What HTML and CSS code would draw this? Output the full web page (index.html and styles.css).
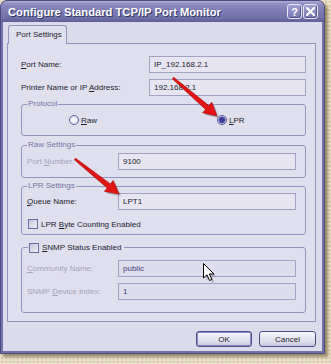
FILE: index.html
```html
<!DOCTYPE html>
<html lang="en">
<head>
    <meta charset="UTF-8">
    <meta name="viewport" content="width=device-width, initial-scale=1.0">
    <title>Configure Standard TCP/IP Port Monitor</title>
    <link rel="stylesheet" href="styles.css">
</head>
<body>
<div class="desktop">
    <div class="window">
        <div class="titlebar">
            <span class="title">Configure Standard TCP/IP Port Monitor</span>
            <div class="title-buttons">
                <span class="tbtn">?</span>
                <span class="tbtn">
                    <svg width="9" height="9" viewBox="0 0 9 9"><path d="M1 1L8 8M8 1L1 8" stroke="#fff" stroke-width="2" stroke-linecap="round"/></svg>
                </span>
            </div>
        </div>
        <div class="frame">
            <div class="client">
                <div class="tabs"><div class="tab">Port Settings</div></div>
                <div class="panel">
                    <div class="row first">
                        <span class="label wide"><u>P</u>ort Name:</span>
                        <div class="field">IP_192.168.2.1</div>
                    </div>
                    <div class="row">
                        <span class="label wide">Printer Name or IP <u>A</u>ddress:</span>
                        <div class="field">192.168.2.1</div>
                    </div>

                    <div class="group protocol">
                        <span class="legend">Protocol</span>
                        <div class="radios">
                            <span class="radio"><span class="dot"></span><span><u>R</u>aw</span></span>
                            <span class="radio checked"><span class="dot"></span><span><u>L</u>PR</span></span>
                        </div>
                    </div>

                    <div class="group raw">
                        <span class="legend">Raw Settings</span>
                        <div class="row first">
                            <span class="label disabled">Port <u>N</u>umber:</span>
                            <div class="field">9100</div>
                        </div>
                    </div>

                    <div class="group lpr">
                        <span class="legend">LPR Settings</span>
                        <div class="row first">
                            <span class="label"><u>Q</u>ueue Name:</span>
                            <div class="field">LPT1</div>
                        </div>
                        <div class="check"><span class="box"></span><span>LPR <u>B</u>yte Counting Enabled</span></div>
                    </div>

                    <div class="group snmp">
                        <div class="legend check"><span class="box"></span><span><u>S</u>NMP Status Enabled</span></div>
                        <div class="row first">
                            <span class="label disabled"><u>C</u>ommunity Name:</span>
                            <div class="field off">public</div>
                        </div>
                        <div class="row">
                            <span class="label disabled">SNMP <u>D</u>evice Index:</span>
                            <div class="field off">1</div>
                        </div>
                    </div>
                </div>
                <div class="buttons">
                    <span class="btn default">OK</span>
                    <span class="btn">Cancel</span>
                </div>
            </div>
        </div>
    </div>

    <!-- red pointers drawn on top of the screenshot -->
    <svg class="arrows" width="331" height="364" viewBox="0 0 331 364">
        <g fill="#5a4a50" opacity="0.35" transform="translate(2 2)">
            <polygon points="172.3,78.8 173.7,77.2 208.8,105.6 211.8,102.2 217,116 202.6,112.8 205.6,109.4"/>
            <polygon points="74.4,159.8 75.6,158.2 110.4,183.9 113.2,180.4 119,194 104.4,191.4 107.2,187.9"/>
        </g>
        <g fill="#e21414" stroke="#a50808" stroke-width="0.6" stroke-linejoin="round">
            <polygon points="172.3,78.8 173.7,77.2 208.8,105.6 211.8,102.2 217,116 202.6,112.8 205.6,109.4"/>
            <polygon points="74.4,159.8 75.6,158.2 110.4,183.9 113.2,180.4 119,194 104.4,191.4 107.2,187.9"/>
        </g>
    </svg>

    <svg class="cursor" width="14" height="21" viewBox="0 0 14 21">
        <polygon points="1.5,1.5 1.5,16 5,12.8 7.5,18.5 9.8,17.5 7.3,12 12,12" fill="#6a6a80" opacity="0.35" transform="translate(1.5 1.5)"/>
        <polygon points="0.5,0.5 0.5,15 4,11.8 6.5,17.5 8.8,16.5 6.3,11 11,11" fill="#fff" stroke="#000" stroke-width="1" stroke-linejoin="round"/>
    </svg>
</div>
</body>
</html>
```

FILE: styles.css
```css
* {
    box-sizing: border-box;
}
body {
    margin: 0;
    font-family: "Liberation Sans", Arial, sans-serif;
    font-size: 8px;
    color: #1c1c2c;
}
.desktop {
    position: relative;
    width: 331px;
    height: 364px;
    overflow: hidden;
    background-color: #e8dec5;
    background-image:
        radial-gradient(rgba(150, 120, 70, 0.22) 1px, transparent 1px),
        radial-gradient(rgba(255, 255, 255, 0.4) 1px, transparent 1px);
    background-size: 4px 4px, 5px 5px;
    background-position: 0 0, 2px 1px;
}
.window {
    width: 325px;
    height: 354px;
    display: flex;
    flex-direction: column;
    border: 1px solid #4b4b7d;
    border-radius: 7px 7px 0 0;
    background: #7272a8;
    box-shadow: 3px 3px 3px rgba(95, 75, 35, 0.55);
    overflow: hidden;
}
.titlebar {
    height: 21px;
    flex: none;
    display: flex;
    align-items: center;
    justify-content: space-between;
    padding: 0 6px 0 7px;
    background: linear-gradient(#aeaed6, #8c8cc0 3px, #7a7ab1 11px, #7070a9 17px, #5f5f98);
}
.title {
    color: #fff;
    font-weight: bold;
    font-size: 11.2px;
    text-shadow: 1px 1px 0 #35356a;
}
.title-buttons {
    display: flex;
    gap: 1px;
}
.tbtn {
    width: 15px;
    height: 15px;
    border: 1px solid #e6e6f4;
    border-radius: 3px;
    background: linear-gradient(#a0a0d0, #7878b2);
    box-shadow: inset -1px -1px 0 #56568e;
    color: #fff;
    font-weight: bold;
    font-size: 11px;
    display: flex;
    align-items: center;
    justify-content: center;
}
.frame {
    flex: 1;
    display: flex;
    padding: 0 2px 2px;
}
.client {
    flex: 1;
    min-width: 0;
    display: flex;
    flex-direction: column;
    background: #dcdbeb;
    padding: 3px 6px 0 4px;
}
.tabs {
    height: 18px;
    padding-left: 1px;
    display: flex;
}
.tab {
    position: relative;
    z-index: 1;
    width: 59px;
    height: 19px;
    padding: 4px 0 0 7px;
    border: 1px solid #9393c0;
    border-bottom: none;
    border-radius: 3px 3px 0 0;
    background: #e0dfee;
}
.panel {
    height: 279px;
    border: 1px solid #9393c0;
    background: #e0dfee;
    padding: 12px 9px 0 13px;
}
.row {
    display: flex;
    align-items: center;
    height: 17px;
    margin-top: 6px;
}
.row.first {
    margin-top: 0;
}
.label {
    width: 91px;
    flex: none;
}
.label.wide {
    width: 128px;
}
.label.disabled {
    color: #a3a3bb;
}
.field {
    flex: 1;
    min-width: 0;
    height: 17px;
    padding: 3px 0 0 4px;
    border: 1px solid #a2a2c4;
    background: #e6e5f1;
    color: #1c1c2c;
}
.field.off {
    background: #dedded;
    color: #3c3c78;
}
.group {
    position: relative;
    border: 1px solid #9494c4;
    border-radius: 3px;
    padding: 0 9px 0 5px;
}
.legend {
    position: absolute;
    top: -6px;
    left: 5px;
    padding: 0 1px;
    background: #e0dfee;
    color: #7474a6;
    line-height: 10px;
}
.protocol {
    height: 32px;
    margin-top: 8px;
    display: flex;
    align-items: center;
}
.radios {
    display: flex;
    padding-left: 42px;
}
.radio {
    display: flex;
    align-items: center;
    gap: 2px;
}
.radio:first-child {
    width: 148px;
}
.dot {
    width: 10px;
    height: 10px;
    border: 1px solid #5c5c98;
    border-radius: 50%;
    background: radial-gradient(circle, #f4f4fa 40%, #c8c8e0);
}
.checked .dot {
    background: radial-gradient(circle, #3c3c9a 2.5px, #8a8acc 3.3px, #e4e4f2 4px, #c8c8e0);
}
.raw {
    height: 33px;
    margin-top: 9px;
    padding-top: 7px;
}
.lpr {
    height: 49px;
    margin-top: 8px;
    padding-top: 6px;
}
.check {
    display: flex;
    align-items: center;
    gap: 3px;
    margin: 9px 0 0 1px;
    height: 10px;
}
.box {
    width: 10px;
    height: 10px;
    flex: none;
    border: 1px solid #6a6aa4;
    background: linear-gradient(135deg, #c4c4dc, #f2f2f8);
}
.snmp {
    height: 66px;
    margin-top: 12px;
    padding-top: 12px;
}
.snmp .legend {
    margin: 0;
    top: -5px;
    left: 6px;
    padding-right: 3px;
    color: #1c1c2c;
}
.buttons {
    display: flex;
    justify-content: flex-end;
    gap: 7px;
    margin-top: 9px;
}
.btn {
    width: 57px;
    height: 16px;
    display: flex;
    align-items: center;
    justify-content: center;
    border: 1px solid #4e4e86;
    border-radius: 3px;
    background: linear-gradient(#f6f6fb, #dcdcec 70%, #c4c4dc);
}
.btn.default {
    width: 56px;
    box-shadow: inset 0 0 0 1px #8a8ad0;
}
.arrows {
    position: absolute;
    left: 0;
    top: 0;
    pointer-events: none;
}
.cursor {
    position: absolute;
    left: 203px;
    top: 263px;
    pointer-events: none;
}
```
